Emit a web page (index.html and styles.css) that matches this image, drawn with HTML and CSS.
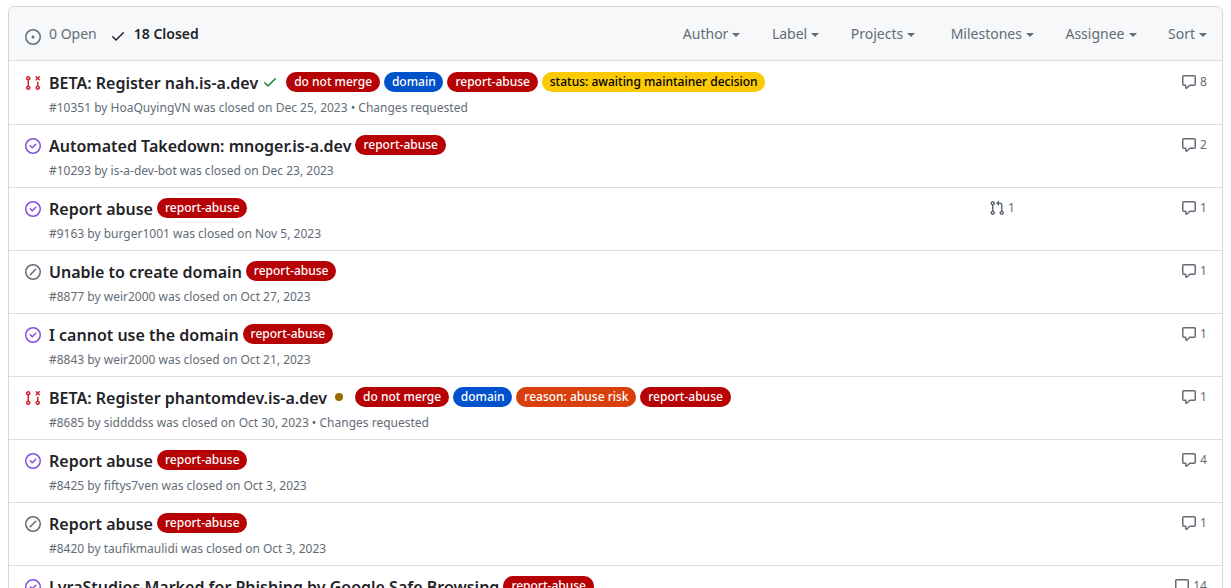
FILE: index.html
```html
<!DOCTYPE html>
<html lang="en">
<head>
<meta charset="utf-8">
<title>Issues</title>
<link rel="stylesheet" href="styles.css">
</head>
<body>
<svg class="defs" width="0" height="0" aria-hidden="true">
  <symbol id="i-open" viewBox="0 0 16 16"><path d="M8 9.5a1.5 1.5 0 1 0 0-3 1.5 1.5 0 0 0 0 3Z"/><path d="M8 0a8 8 0 1 1 0 16A8 8 0 0 1 8 0ZM1.5 8a6.5 6.5 0 1 0 13 0 6.5 6.5 0 0 0-13 0Z"/></symbol>
  <symbol id="i-check" viewBox="0 0 16 16"><path d="M13.78 4.22a.75.75 0 0 1 0 1.06l-7.25 7.25a.75.75 0 0 1-1.06 0L2.22 9.28a.751.751 0 0 1 .018-1.042.751.751 0 0 1 1.042-.018L6 10.94l6.72-6.72a.75.75 0 0 1 1.06 0Z"/></symbol>
  <symbol id="i-done" viewBox="0 0 16 16"><path d="M11.28 6.78a.75.75 0 0 0-1.06-1.06L7.25 8.69 5.78 7.22a.75.75 0 0 0-1.06 1.06l2 2a.75.75 0 0 0 1.06 0l3.5-3.5Z"/><path d="M16 8A8 8 0 1 1 0 8a8 8 0 0 1 16 0Zm-1.5 0a6.5 6.5 0 1 0-13 0 6.5 6.5 0 0 0 13 0Z"/></symbol>
  <symbol id="i-skip" viewBox="0 0 16 16"><path d="M11.28 4.72a.75.75 0 0 1 0 1.06l-5.5 5.5a.75.75 0 1 1-1.06-1.06l5.5-5.5a.75.75 0 0 1 1.06 0Z"/><path d="M16 8A8 8 0 1 1 0 8a8 8 0 0 1 16 0Zm-1.5 0a6.5 6.5 0 1 0-13 0 6.5 6.5 0 0 0 13 0Z"/></symbol>
  <symbol id="i-prclosed" viewBox="0 0 16 16"><path d="M3.25 1A2.25 2.25 0 0 1 4 5.372v5.256a2.251 2.251 0 1 1-1.5 0V5.372A2.251 2.251 0 0 1 3.25 1Zm9.5 5.5a.75.75 0 0 1 .75.75v3.378a2.251 2.251 0 1 1-1.5 0V7.25a.75.75 0 0 1 .75-.75Zm-2.03-5.273a.75.75 0 0 1 1.06 0l.97.97.97-.97a.748.748 0 0 1 1.265.332.75.75 0 0 1-.205.729l-.97.97.97.97a.751.751 0 0 1-.018 1.042.751.751 0 0 1-1.042.018l-.97-.97-.97.97a.749.749 0 0 1-1.275-.326.749.749 0 0 1 .215-.734l.97-.97-.97-.97a.75.75 0 0 1 0-1.06ZM2.5 3.25a.75.75 0 1 0 1.5 0 .75.75 0 0 0-1.5 0ZM3.25 12a.75.75 0 1 0 0 1.5.75.75 0 0 0 0-1.5Zm9.5 0a.75.75 0 1 0 0 1.5.75.75 0 0 0 0-1.5Z"/></symbol>
  <symbol id="i-pr" viewBox="0 0 16 16"><path d="M1.5 3.25a2.25 2.25 0 1 1 3 2.122v5.256a2.251 2.251 0 1 1-1.5 0V5.372A2.25 2.25 0 0 1 1.5 3.25Zm5.677-.177L9.573.677A.25.25 0 0 1 10 .854V2.5h1A2.5 2.5 0 0 1 13.5 5v5.628a2.251 2.251 0 1 1-1.5 0V5a1 1 0 0 0-1-1h-1v1.646a.25.25 0 0 1-.427.177L7.177 3.427a.25.25 0 0 1 0-.354ZM3.75 2.5a.75.75 0 1 0 0 1.5.75.75 0 0 0 0-1.5Zm0 9.5a.75.75 0 1 0 0 1.5.75.75 0 0 0 0-1.5Zm8.25.75a.75.75 0 1 0 1.5 0 .75.75 0 0 0-1.5 0Z"/></symbol>
  <symbol id="i-comment" viewBox="0 0 16 16"><path d="M1 2.75C1 1.784 1.784 1 2.75 1h10.5c.966 0 1.75.784 1.75 1.75v7.5A1.75 1.75 0 0 1 13.25 12H9.06l-2.573 2.573A1.458 1.458 0 0 1 4 13.543V12H2.75A1.75 1.75 0 0 1 1 10.25Zm1.75-.25a.25.25 0 0 0-.25.25v7.5c0 .138.112.25.25.25h2a.75.75 0 0 1 .75.75v2.19l2.72-2.72a.749.749 0 0 1 .53-.22h4.5a.25.25 0 0 0 .25-.25v-7.5a.25.25 0 0 0-.25-.25Z"/></symbol>
</svg>

<main class="box">
  <header class="box-head">
    <div class="states">
      <a class="state"><svg class="icon icon-open"><use href="#i-open"/></svg>0 Open</a>
      <a class="state state-on"><svg class="icon icon-tick"><use href="#i-check"/></svg>18 Closed</a>
    </div>
    <nav class="filters">
      <span class="filter">Author<i class="caret"></i></span>
      <span class="filter">Label<i class="caret"></i></span>
      <span class="filter filter-wide">Projects<i class="caret"></i></span>
      <span class="filter">Milestones<i class="caret"></i></span>
      <span class="filter">Assignee<i class="caret"></i></span>
      <span class="filter">Sort<i class="caret"></i></span>
    </nav>
  </header>

  <article class="row row-tall">
    <svg class="icon state-icon red"><use href="#i-prclosed"/></svg>
    <div class="body">
      <div class="title-line"><a class="title">BETA: Register nah.is-a.dev</a><svg class="status green"><use href="#i-check"/></svg><span class="label l-red l-after-status">do not merge</span><span class="label l-blue">domain</span><span class="label l-red">report-abuse</span><span class="label l-yellow">status: awaiting maintainer decision</span></div>
      <div class="meta">#10351 by HoaQuyingVN was closed on Dec 25, 2023 • Changes requested</div>
    </div>
    <div class="cols"><span class="col"></span><span class="col"></span><span class="col"><svg class="icon"><use href="#i-comment"/></svg><b class="num">8</b></span></div>
  </article>

  <article class="row">
    <svg class="icon state-icon purple"><use href="#i-done"/></svg>
    <div class="body">
      <div class="title-line"><a class="title">Automated Takedown: mnoger.is-a.dev</a><span class="label l-red">report-abuse</span></div>
      <div class="meta">#10293 by is-a-dev-bot was closed on Dec 23, 2023</div>
    </div>
    <div class="cols"><span class="col"></span><span class="col"></span><span class="col"><svg class="icon"><use href="#i-comment"/></svg><b class="num">2</b></span></div>
  </article>

  <article class="row">
    <svg class="icon state-icon purple"><use href="#i-done"/></svg>
    <div class="body">
      <div class="title-line"><a class="title">Report abuse</a><span class="label l-red">report-abuse</span></div>
      <div class="meta">#9163 by burger1001 was closed on Nov 5, 2023</div>
    </div>
    <div class="cols"><span class="col"><svg class="icon"><use href="#i-pr"/></svg><b class="num">1</b></span><span class="col"></span><span class="col"><svg class="icon"><use href="#i-comment"/></svg><b class="num">1</b></span></div>
  </article>

  <article class="row">
    <svg class="icon state-icon grey"><use href="#i-skip"/></svg>
    <div class="body">
      <div class="title-line"><a class="title">Unable to create domain</a><span class="label l-red">report-abuse</span></div>
      <div class="meta">#8877 by weir2000 was closed on Oct 27, 2023</div>
    </div>
    <div class="cols"><span class="col"></span><span class="col"></span><span class="col"><svg class="icon"><use href="#i-comment"/></svg><b class="num">1</b></span></div>
  </article>

  <article class="row">
    <svg class="icon state-icon purple"><use href="#i-done"/></svg>
    <div class="body">
      <div class="title-line"><a class="title">I cannot use the domain</a><span class="label l-red">report-abuse</span></div>
      <div class="meta">#8843 by weir2000 was closed on Oct 21, 2023</div>
    </div>
    <div class="cols"><span class="col"></span><span class="col"></span><span class="col"><svg class="icon"><use href="#i-comment"/></svg><b class="num">1</b></span></div>
  </article>

  <article class="row">
    <svg class="icon state-icon red"><use href="#i-prclosed"/></svg>
    <div class="body">
      <div class="title-line"><a class="title">BETA: Register phantomdev.is-a.dev</a><i class="dot"></i><span class="label l-red l-after-dot">do not merge</span><span class="label l-blue">domain</span><span class="label l-orange">reason: abuse risk</span><span class="label l-red">report-abuse</span></div>
      <div class="meta">#8685 by siddddss was closed on Oct 30, 2023 • Changes requested</div>
    </div>
    <div class="cols"><span class="col"></span><span class="col"></span><span class="col"><svg class="icon"><use href="#i-comment"/></svg><b class="num">1</b></span></div>
  </article>

  <article class="row">
    <svg class="icon state-icon purple"><use href="#i-done"/></svg>
    <div class="body">
      <div class="title-line"><a class="title">Report abuse</a><span class="label l-red">report-abuse</span></div>
      <div class="meta">#8425 by fiftys7ven was closed on Oct 3, 2023</div>
    </div>
    <div class="cols"><span class="col"></span><span class="col"></span><span class="col"><svg class="icon"><use href="#i-comment"/></svg><b class="num">4</b></span></div>
  </article>

  <article class="row">
    <svg class="icon state-icon grey"><use href="#i-skip"/></svg>
    <div class="body">
      <div class="title-line"><a class="title">Report abuse</a><span class="label l-red">report-abuse</span></div>
      <div class="meta">#8420 by taufikmaulidi was closed on Oct 3, 2023</div>
    </div>
    <div class="cols"><span class="col"></span><span class="col"></span><span class="col"><svg class="icon"><use href="#i-comment"/></svg><b class="num">1</b></span></div>
  </article>

  <article class="row">
    <svg class="icon state-icon purple"><use href="#i-done"/></svg>
    <div class="body">
      <div class="title-line"><a class="title">LyraStudios Marked for Phishing by Google Safe Browsing</a><span class="label l-red">report-abuse</span></div>
    </div>
    <div class="cols"><span class="col"></span><span class="col"></span><span class="col"><svg class="icon"><use href="#i-comment"/></svg><b class="num">14</b></span></div>
  </article>
</main>
</body>
</html>
```
FILE: styles.css
```css
* { box-sizing: border-box; }
html { overflow: hidden; height: 100%; }
body {
  margin: 0;
  padding: 6px 8px 0;
  height: 100%;
  overflow: hidden;
  background: #fff;
  color: #1f2328;
  font-family: "Noto Sans", sans-serif;
  font-size: 14px;
  line-height: 1.5;
}
.defs { position: absolute; }
.icon { width: 16px; height: 16px; fill: currentColor; flex: none; }

.box { border: 1px solid #d0d7de; border-radius: 6px 6px 0 0; }
.box-head {
  display: flex;
  justify-content: space-between;
  align-items: center;
  height: 53px;
  padding: 0 15px 0 16px;
  background: #f6f8fa;
  border-radius: 6px 6px 0 0;
}
.states { display: flex; color: #636c76; }
.state { display: flex; align-items: flex-start; }
.state-on { margin-left: 13px; color: #1f2328; font-weight: 600; }
.icon-open { margin: 6px 8px 0 0; }
.icon-tick { margin: 5px 8px 0 0; }
.filters { display: flex; gap: 31.5px; color: #636c76; }
.filter-wide { margin-right: 4px; }
.filter { display: flex; align-items: center; }
.caret {
  width: 0;
  height: 0;
  margin: 3px 0 0 4px;
  border-top: 4px solid currentColor;
  border-left: 4px solid transparent;
  border-right: 4px solid transparent;
}

.row {
  display: flex;
  height: 63px;
  border-top: 1px solid #d8dee4;
}
.row-tall { height: 64px; padding-top: 1px; }
.state-icon { margin: 13px 0 0 16px; }
.red { color: #cf222e; }
.purple { color: #8250df; }
.grey { color: #636c76; }
.body { flex: 1; min-width: 0; padding: 8px 8px 0; }
.title-line { display: flex; align-items: flex-start; height: 24px; white-space: nowrap; }
.title { font-size: 16px; font-weight: 600; line-height: 24px; margin-top: 1px; color: #1f2328; }
.status { width: 16px; height: 16px; fill: currentColor; margin: 4px 0 0 4px; }
.green { color: #1a7f37; }
.dot {
  width: 8px;
  height: 8px;
  margin: 8px 0 0 8px;
  border-radius: 50%;
  background: #9a6700;
}
.label {
  height: 20px;
  margin: 2px 0 0 4px;
  padding: 0 7.75px 0 8px;
  border-radius: 2em;
  font-size: 12px;
  font-weight: 500;
  line-height: 20px;
  color: #fff;
}
.l-after-status { margin-left: 8px; }
.l-after-dot { margin-left: 12px; }
.l-red { background: #b60205; }
.l-blue { background: #0052cc; }
.l-orange { background: #d93f0b; }
.l-yellow { background: #fbca04; color: #000; }
.meta { margin-top: 5px; font-size: 12px; line-height: 18px; color: #636c76; }

.cols { flex: none; display: flex; gap: 8px; width: 25%; padding: 8px 15px 0 8px; }
.col {
  flex: 1;
  display: flex;
  justify-content: flex-end;
  align-items: flex-start;
  padding-top: 4px;
  color: #636c76;
}
.num { margin-left: 3px; font-size: 12px; font-weight: 400; line-height: 16px; }
```
